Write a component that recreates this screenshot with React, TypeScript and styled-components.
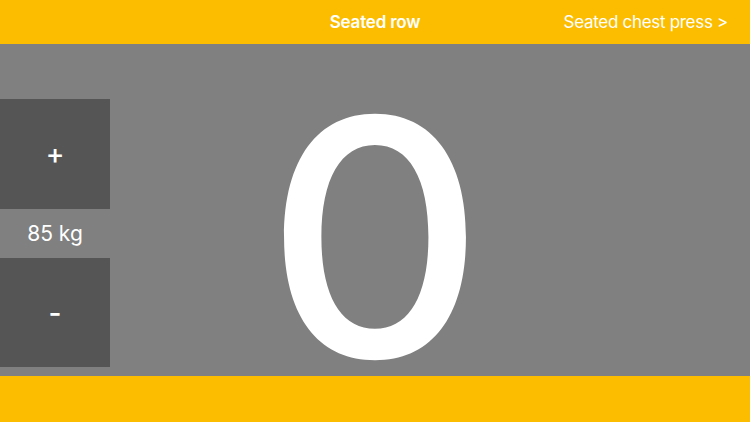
import React, { useState } from "react";
import styled, { createGlobalStyle } from "styled-components";

const GlobalStyle = createGlobalStyle`
  html, body {
    margin: 0;
    padding: 0;
    background: #808080;
    font-family: Inter, "Liberation Sans", sans-serif;
  }
`;

const Screen = styled.div`
  width: 750px;
  height: 422px;
  display: flex;
  flex-direction: column;
  overflow: hidden;
  background: #808080;
`;

const Header = styled.header`
  height: 44px;
  flex: none;
  background: #fcbd00;
  display: grid;
  grid-template-columns: 1fr auto 1fr;
  align-items: center;
  padding: 0 22px;
  color: #ffffff;
  font-size: 17px;
`;

const Title = styled.div`
  font-weight: 600;
  letter-spacing: -0.2px;
`;

const NextLink = styled.div`
  justify-self: end;
  font-weight: 400;
  letter-spacing: -0.3px;
`;

const Main = styled.main`
  height: 332px;
  flex: none;
  box-sizing: border-box;
  display: grid;
  grid-template-columns: 110px 1fr 110px;
  align-items: center;
  padding-top: 46px;
`;

const WeightColumn = styled.div`
  display: flex;
  flex-direction: column;
`;

const StepButton = styled.button<{ $tall?: number }>`
  width: 110px;
  height: ${(p) => p.$tall ?? 110}px;
  border: none;
  background: #555555;
  color: #ffffff;
  font-family: Inter, "Liberation Sans", sans-serif;
  font-size: 28px;
  font-weight: 500;
  padding: 0;
  cursor: pointer;
`;

const WeightLabel = styled.div`
  height: 49px;
  display: flex;
  align-items: center;
  justify-content: center;
  color: #ffffff;
  font-size: 21px;
`;

const Counter = styled.div`
  text-align: center;
  color: #ffffff;
  font-size: 330px;
  font-weight: 500;
  line-height: 286px;
  transform: translateY(4px) scaleX(1.03);
`;

const Footer = styled.footer`
  height: 46px;
  flex: none;
  background: #fcbd00;
`;

export default function App() {
  const [weight, setWeight] = useState(85);
  const reps = 0;

  return (
    <>
      <GlobalStyle />
      <Screen>
        <Header>
          <span />
          <Title>Seated row</Title>
          <NextLink>Seated chest press &gt;</NextLink>
        </Header>
        <Main>
          <WeightColumn>
            <StepButton onClick={() => setWeight(weight + 5)}>+</StepButton>
            <WeightLabel>{weight} kg</WeightLabel>
            <StepButton $tall={109} onClick={() => setWeight(weight - 5)}>-</StepButton>
          </WeightColumn>
          <Counter>{reps}</Counter>
          <span />
        </Main>
        <Footer />
      </Screen>
    </>
  );
}
